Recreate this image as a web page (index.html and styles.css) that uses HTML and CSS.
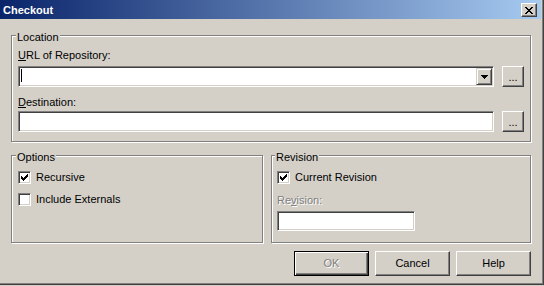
FILE: index.html
```html
<!DOCTYPE html>
<html lang="en">
<head>
    <meta charset="UTF-8">
    <title>Checkout</title>
    <link rel="stylesheet" href="styles.css">
</head>
<body>
    <div class="window">
        <div class="titlebar">
            <span>Checkout</span>
            <span class="close">
                <svg width="8" height="7" viewBox="0 0 8 7" shape-rendering="crispEdges">
                    <path d="M0 0h2v1H0zM6 0h2v1H6zM1 1h2v1H1zM5 1h2v1H5zM2 2h4v1H2zM3 3h2v1H3zM2 4h4v1H2zM1 5h2v1H1zM5 5h2v1H5zM0 6h2v1H0zM6 6h2v1H6z" fill="#000"/>
                </svg>
            </span>
        </div>
        <div class="content">
            <div class="group location">
                <span class="group-title">Location</span>
                <label class="label url-label"><u>U</u>RL of Repository:</label>
                <div class="row url-row">
                    <div class="field combo">
                        <span class="caret"></span>
                        <span class="drop">
                            <svg width="7" height="4" viewBox="0 0 7 4" shape-rendering="crispEdges">
                                <path d="M0 0h7v1H0zM1 1h5v1H1zM2 2h3v1H2zM3 3h1v1H3z" fill="#000"/>
                            </svg>
                        </span>
                    </div>
                    <button class="btn browse">...</button>
                </div>
                <label class="label dest-label"><u>D</u>estination:</label>
                <div class="row dest-row">
                    <div class="field edit"></div>
                    <button class="btn browse">...</button>
                </div>
            </div>
            <div class="groups">
                <div class="group options">
                    <span class="group-title">Options</span>
                    <label class="check first">
                        <span class="box checked">
                            <svg width="7" height="7" viewBox="0 0 7 7" shape-rendering="crispEdges">
                                <path d="M0 2h1v3H0zM1 3h1v3H1zM2 4h1v3H2zM3 3h1v3H3zM4 2h1v3H4zM5 1h1v3H5zM6 0h1v3H6z" fill="#000"/>
                            </svg>
                        </span>
                        Recursive
                    </label>
                    <label class="check second">
                        <span class="box"></span>
                        Include Externals
                    </label>
                </div>
                <div class="group revision">
                    <span class="group-title">Revision</span>
                    <label class="check first">
                        <span class="box checked">
                            <svg width="7" height="7" viewBox="0 0 7 7" shape-rendering="crispEdges">
                                <path d="M0 2h1v3H0zM1 3h1v3H1zM2 4h1v3H2zM3 3h1v3H3zM4 2h1v3H4zM5 1h1v3H5zM6 0h1v3H6z" fill="#000"/>
                            </svg>
                        </span>
                        Current Revision
                    </label>
                    <label class="label disabled rev-label">Re<u>v</u>ision:</label>
                    <div class="field rev-edit"></div>
                </div>
            </div>
            <div class="buttons">
                <button class="btn push default" disabled>OK</button>
                <button class="btn push">Cancel</button>
                <button class="btn push">Help</button>
            </div>
        </div>
    </div>
</body>
</html>
```

FILE: styles.css
```css
* {
    box-sizing: border-box;
}
body {
    margin: 0;
    background-color: #d4d0c8;
    font-family: "Liberation Sans", Arial, sans-serif;
    font-size: 11px;
    line-height: 13px;
    color: #000;
}
.window {
    width: 544px;
    height: 285px;
    display: flex;
    flex-direction: column;
    padding: 0 2px 2px 0;
    border-right: 1px solid #404040;
    border-bottom: 1px solid #404040;
    box-shadow: inset -1px -1px #808080;
}
.titlebar {
    height: 19px;
    display: flex;
    align-items: center;
    justify-content: space-between;
    padding: 1px 4px 0 3px;
    background: linear-gradient(to right, #0a246a, #a6caf0);
    color: #fff;
    font-weight: bold;
}
.close {
    width: 16px;
    height: 14px;
    display: flex;
    align-items: center;
    justify-content: center;
    background-color: #d4d0c8;
    border: 1px solid;
    border-color: #fff #404040 #404040 #fff;
    box-shadow: inset -1px -1px #808080;
}
.content {
    padding: 16px 10px 0 11px;
}
.group {
    display: flex;
    flex-direction: column;
    padding: 0 6px 9px 6px;
    border: 1px solid #808080;
    box-shadow: inset 1px 1px #fff, 1px 1px #fff;
}
.group-title {
    align-self: flex-start;
    margin: -5px 0 0 -2px;
    padding: 0 1px;
    background-color: #d4d0c8;
}
.label {
    display: block;
}
.url-label {
    margin-top: 5px;
}
.dest-label {
    margin-top: 9px;
}
.row {
    display: flex;
    gap: 8px;
}
.url-row {
    margin-top: 4px;
}
.dest-row {
    margin-top: 2px;
}
.field {
    background-color: #fff;
    border: 1px solid;
    border-color: #808080 #fff #fff #808080;
    box-shadow: inset 1px 1px #404040, inset -1px -1px #d4d0c8;
}
.combo, .edit {
    flex: 1;
    height: 21px;
    display: flex;
    align-items: stretch;
}
.caret {
    width: 1px;
    height: 13px;
    margin: 2px 0 0 2px;
    background-color: #000;
}
.drop {
    width: 16px;
    margin: 1px 1px 1px auto;
    display: flex;
    align-items: center;
    justify-content: center;
    background-color: #d4d0c8;
    border: 1px solid;
    border-color: #d4d0c8 #404040 #404040 #d4d0c8;
    box-shadow: inset 1px 1px #fff, inset -1px -1px #808080;
}
.btn {
    margin: 0;
    padding: 0;
    font-family: inherit;
    font-size: 11px;
    line-height: 13px;
    color: #000;
    background-color: #d4d0c8;
    border: 1px solid;
    border-color: #fff #404040 #404040 #fff;
    box-shadow: inset -1px -1px #808080;
}
.browse {
    width: 22px;
    height: 21px;
    padding-top: 2px;
}
.groups {
    display: flex;
    gap: 8px;
    margin-top: 13px;
}
.options, .revision {
    height: 88px;
}
.options {
    width: 252px;
}
.revision {
    width: 260px;
    padding-left: 5px;
}
.check {
    display: flex;
    align-items: center;
    gap: 5px;
    height: 13px;
}
.check.first {
    margin-top: 7px;
}
.check.second {
    margin-top: 9px;
}
.box {
    width: 13px;
    height: 13px;
    display: flex;
    padding: 2px;
    background-color: #fff;
    border: 1px solid;
    border-color: #808080 #fff #fff #808080;
    box-shadow: inset 1px 1px #404040, inset -1px -1px #d4d0c8;
}
.disabled {
    color: #808080;
    text-shadow: 1px 1px #fff;
}
.rev-label {
    margin-top: 10px;
}
.rev-edit {
    width: 138px;
    height: 20px;
    margin-top: 4px;
}
.buttons {
    display: flex;
    justify-content: flex-end;
    gap: 6px;
    margin-top: 8px;
}
.push {
    width: 75px;
    height: 25px;
}
.default {
    color: #808080;
    text-shadow: 1px 1px #fff;
    border-color: #000;
    box-shadow: inset 1px 1px #fff, inset -2px -2px #404040, inset -1px -1px #808080;
    box-shadow: inset 1px 1px #fff, inset -1px -1px #404040, inset -2px -2px #808080;
}
```
